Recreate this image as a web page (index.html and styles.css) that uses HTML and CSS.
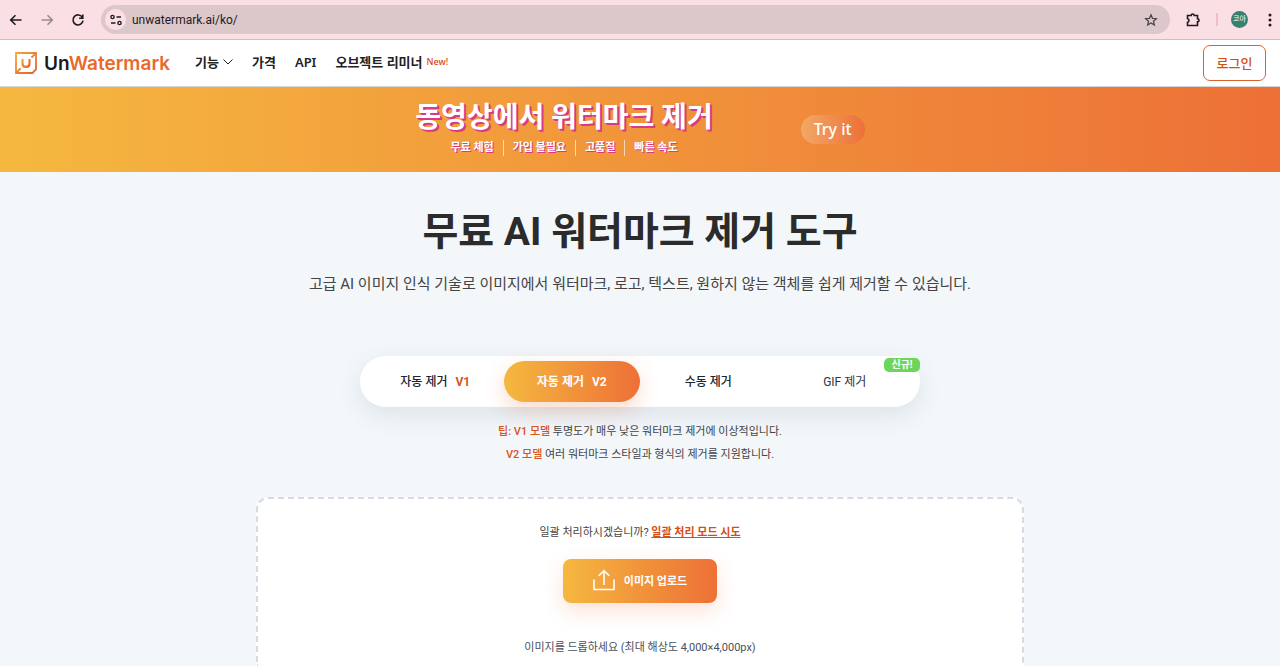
FILE: index.html
```html
<!DOCTYPE html>
<html lang="ko">
<head>
  <meta charset="UTF-8" />
  <title>UnWatermark</title>
  <meta name="viewport" content="width=device-width, initial-scale=1.0" />
  <link rel="stylesheet" href="styles.css">
</head>

<body>
  <div class="browser-bar">
    <button class="icon-btn" aria-label="뒤로">
      <svg width="16" height="16" viewBox="0 0 16 16"><path d="M13.5 8H3M7.500 3.200L2.700 8l4.800 4.800" /></svg>
    </button>
    <button class="icon-btn muted" aria-label="앞으로">
      <svg width="16" height="16" viewBox="0 0 16 16"><path d="M2.500 8H13M8.500 3.200L13.300 8l-4.800 4.800" /></svg>
    </button>
    <button class="icon-btn" aria-label="새로고침">
      <svg width="16" height="16" viewBox="0 0 16 16"><path d="M12.300 5.300A5 5 0 1 0 13 8.600M12.800 2.500v3.700H9.100" /></svg>
    </button>
    <div class="address">
      <button class="site-info" aria-label="사이트 정보">
        <svg width="14" height="14" viewBox="0 0 14 14"><circle cx="3.500" cy="4" r="1.600" /><path d="M7.500 4H12M2 10h4.500" /><circle cx="10.500" cy="10" r="1.600" /></svg>
      </button>
      <input type="text" class="url" aria-label="주소" value="unwatermark.ai/ko/" />
      <button class="icon-btn thin" aria-label="북마크">
        <svg width="14" height="14" viewBox="0 0 16 16"><path d="M8 2l1.700 4.100 4.500.4-3.400 2.900 1 4.400L8 11.500l-3.800 2.300 1-4.400L1.800 6.500l4.500-.4z" /></svg>
      </button>
    </div>
    <button class="icon-btn" aria-label="확장 프로그램">
      <svg width="16" height="16" viewBox="0 0 16 16"><path d="M2.500 3.500h3.700a1.500 1.500 0 0 1 3 0h3.300v3.300a1.500 1.500 0 0 1 0 3v3.700h-10v-3.200c2-.4 2-3.200 0-3.600z" /></svg>
    </button>
    <span class="bar-divider"></span>
    <span class="avatar">코아</span>
    <button class="icon-btn dots" aria-label="메뉴">
      <svg width="16" height="16" viewBox="0 0 16 16"><circle cx="8" cy="3" r="1.500" /><circle cx="8" cy="8" r="1.500" /><circle cx="8" cy="13" r="1.500" /></svg>
    </button>
  </div>

  <header class="header">
    <a href="#" class="logo">
      <svg width="22" height="22" viewBox="0 0 22 22">
        <defs>
          <linearGradient id="logoFill" x1="0" y1="0" x2="1" y2="1">
            <stop offset="0" stop-color="#f4a53c" />
            <stop offset="1" stop-color="#e4602c" />
          </linearGradient>
        </defs>
        <path d="M1 1H21V17.500L17.500 21H1zM18 4L21 1M1 21L4 18" fill="none" stroke="url(#logoFill)" stroke-width="1.800" />
        <path d="M7.500 7v4.500c0 4.600 7 4.600 7 0V7" fill="none" stroke="url(#logoFill)" stroke-width="2.200" />
        <path d="M16.500 5.500l1.500-1.500M4 18l1.500-1.500" fill="none" stroke="#ea7a32" stroke-width="2.200" />
      </svg>
      <span class="logo-text">Un<span>Watermark</span></span>
    </a>
    <nav class="nav">
      <a href="#">기능 <svg width="10" height="6" viewBox="0 0 10 6"><path d="M.5.5L5 5 9.500.5" /></svg></a>
      <a href="#">가격</a>
      <a href="#">API</a>
      <a href="#">오브젝트 리미너 <span class="new">New!</span></a>
    </nav>
    <button class="login">로그인</button>
  </header>

  <section class="banner">
    <div class="banner-text">
      <p class="banner-title">동영상에서 워터마크 제거</p>
      <ul class="banner-list">
        <li>무료 체험</li>
        <li>가입 불필요</li>
        <li>고품질</li>
        <li>빠른 속도</li>
      </ul>
    </div>
    <button class="try">Try it</button>
  </section>

  <main class="main">
    <h1>무료 AI 워터마크 제거 도구</h1>
    <p class="subtitle">고급 AI 이미지 인식 기술로 이미지에서 워터마크, 로고, 텍스트, 원하지 않는 객체를 쉽게 제거할 수 있습니다.</p>

    <div class="tabs">
      <button class="tab">자동 제거 <span>V1</span></button>
      <button class="tab active">자동 제거 <span>V2</span></button>
      <button class="tab">수동 제거</button>
      <button class="tab gif">GIF 제거</button>
      <span class="badge">신규!</span>
    </div>

    <div class="tips">
      <p><b>팁: V1 모델</b> 투명도가 매우 낮은 워터마크 제거에 이상적입니다.</p>
      <p><b>V2 모델</b> 여러 워터마크 스타일과 형식의 제거를 지원합니다.</p>
    </div>

    <div class="dropzone">
      <p class="batch">일괄 처리하시겠습니까? <a href="#">일괄 처리 모드 시도</a></p>
      <button class="upload">
        <svg width="22" height="22" viewBox="0 0 22 22"><path d="M1 10.500V20.500H21V10.500M11 16V2M5.800 6.800L11 1.600l5.200 5.200" /></svg>
        이미지 업로드
      </button>
      <p class="hint">이미지를 드롭하세요 (최대 해상도 4,000×4,000px)</p>
    </div>
  </main>
</body>
</html>
```

FILE: styles.css
```css
* {
  box-sizing: border-box;
}

body {
  display: flex;
  flex-direction: column;
  height: 100vh;
  margin: 0;
  overflow: hidden;
  font-family: Roboto, "Noto Sans CJK KR", sans-serif;
  background: #f3f7fa;
  color: #333;
}

h1,
p,
ul {
  margin: 0;
  padding: 0;
}

button,
input {
  font-family: inherit;
  border: none;
  background: none;
  padding: 0;
}

button {
  cursor: pointer;
}

a {
  color: inherit;
  text-decoration: none;
}

svg {
  display: block;
  fill: none;
  stroke: currentColor;
}

/* browser bar */
.browser-bar {
  display: flex;
  align-items: center;
  flex: none;
  gap: 15px;
  height: 40px;
  padding: 0 2px 0 8px;
  background: #fae0e4;
  border-bottom: 1px solid #cdbfc2;
}

.icon-btn {
  color: #1f1b1c;
  stroke-width: 1.6;
}

.icon-btn.muted {
  color: #9a8a8d;
}

.icon-btn.thin {
  color: #4a4345;
  stroke-width: 1.4;
}

.icon-btn.dots svg {
  fill: currentColor;
  stroke: none;
}

.address {
  display: flex;
  align-items: center;
  flex: 1;
  height: 29px;
  padding: 0 12px 0 4px;
  border-radius: 15px;
  background: #dcc8cb;
}

.site-info {
  display: flex;
  align-items: center;
  justify-content: center;
  width: 21px;
  height: 21px;
  border-radius: 50%;
  background: #fae0e4;
  color: #1f1b1c;
  stroke-width: 1.4;
}

.url {
  flex: 1;
  min-width: 0;
  margin-left: 6px;
  font-size: 12px;
  color: #1f1b1c;
}

.bar-divider {
  width: 2px;
  height: 13px;
  background: #f6bcc6;
}

.browser-bar .avatar {
  width: 17px;
  height: 17px;
  margin: 0 -1px 0 -2px;
  border-radius: 50%;
  background: #38816f;
  color: #fff;
  font-size: 7px;
  line-height: 17px;
  text-align: center;
}

/* header */
.header {
  display: flex;
  align-items: center;
  flex: none;
  height: 47px;
  padding: 0 14px 0 15px;
  background: #fff;
  border-bottom: 1px solid #d5d5d5;
}

.logo {
  display: flex;
  align-items: center;
  gap: 7px;
}

.logo-text {
  font-family: Inter, sans-serif;
  font-size: 19px;
  font-weight: 600;
  color: #1a1a1a;
}

.logo-text span {
  color: #e9692c;
}

.nav {
  display: flex;
  gap: 19px;
  margin-left: 25px;
  padding-bottom: 2px;
  font-family: "Noto Sans", "Noto Sans CJK KR", sans-serif;
  font-size: 13px;
  font-weight: 600;
  line-height: 20px;
  color: #222;
}

.nav a {
  display: flex;
  align-items: center;
  gap: 4px;
}

.nav .new {
  font-size: 9px;
  font-weight: 500;
  color: #d9480f;
}

.login {
  width: 63px;
  height: 36px;
  margin-left: auto;
  padding-bottom: 2px;
  border: 1px solid #d9622f;
  border-radius: 7px;
  font-size: 13px;
  font-weight: 500;
  color: #d4500f;
}

/* banner */
.banner {
  display: flex;
  align-items: center;
  justify-content: center;
  flex: none;
  gap: 88px;
  height: 85px;
  background: linear-gradient(to right, #f5b83f, #ed7037);
  color: #fff;
}

.banner-text {
  padding-bottom: 4px;
  text-align: center;
}

.banner-title {
  font-size: 28px;
  font-weight: 600;
  line-height: 36px;
  text-shadow: 1px 1px 0 #d53a8c, 2px 2px 0 #d53a8c;
}

.banner-list {
  display: flex;
  justify-content: center;
  margin-top: 4px;
  list-style: none;
  font-size: 11px;
  font-weight: 600;
  line-height: 16px;
  text-shadow: 1px 1px 0 #d53a8c;
}

.banner-list li {
  padding: 0 9px;
}

.banner-list li + li {
  border-left: 1px solid #fbd9b4;
}

.try {
  width: 64px;
  height: 29px;
  padding-bottom: 2px;
  border-radius: 15px;
  background: linear-gradient(to right, #f2a866, #ed7037);
  color: #fff;
  font-family: "Noto Sans", sans-serif;
  font-size: 16px;
  font-weight: 500;
}

/* main */
.main {
  display: flex;
  flex-direction: column;
  align-items: center;
  flex: 1;
  padding-top: 30px;
}

h1 {
  font-size: 39px;
  font-weight: 700;
  line-height: 60px;
  color: #2b2b2b;
}

.subtitle {
  margin-top: 10px;
  font-size: 15px;
  line-height: 24px;
  color: #444;
}

.tabs {
  position: relative;
  display: grid;
  grid-template-columns: repeat(4, 1fr);
  width: 560px;
  max-width: 100%;
  margin-top: 60px;
  padding: 5px 7px;
  border-radius: 26px;
  background: #fff;
  box-shadow: 0 8px 24px rgba(60, 80, 110, 0.12);
}

.tab {
  height: 41px;
  padding-bottom: 2px;
  border-radius: 21px;
  font-size: 12px;
  font-weight: 500;
  color: #1c2333;
}

.tab span {
  margin-left: 5px;
  font-weight: 700;
  color: #d9541e;
}

.tab.active {
  background: linear-gradient(to right, #f5b83f, #ed7037);
  box-shadow: 0 8px 20px rgba(237, 112, 55, 0.25);
  font-weight: 700;
  color: #fff;
}

.tab.active span {
  color: #fff;
}

.tab.gif {
  font-weight: 400;
  color: #333;
}

.badge {
  position: absolute;
  top: 2px;
  right: 0;
  width: 36px;
  border-radius: 5px;
  background: #6bd65a;
  color: #fff;
  font-size: 10px;
  font-weight: 700;
  line-height: 14px;
  text-align: center;
}

.tips {
  margin-top: 13px;
  font-size: 11px;
  line-height: 23px;
  text-align: center;
  color: #444;
}

.tips b {
  font-weight: 500;
  color: #d9541e;
}

.dropzone {
  display: flex;
  flex-direction: column;
  align-items: center;
  flex: 1;
  width: 60%;
  margin-top: 31px;
  padding-top: 24px;
  border: 2px dashed #d8dae3;
  border-bottom: none;
  border-radius: 12px 12px 0 0;
  background: #fff;
}

.batch {
  font-size: 11px;
  line-height: 20px;
  color: #444;
}

.batch a {
  font-weight: 600;
  color: #d4500f;
  text-decoration: underline;
}

.upload {
  display: flex;
  align-items: center;
  justify-content: center;
  gap: 9px;
  width: 154px;
  height: 44px;
  margin-top: 16px;
  padding-bottom: 2px;
  border-radius: 8px;
  background: linear-gradient(to right, #f5b83f, #ed7037);
  box-shadow: 0 8px 20px rgba(237, 112, 55, 0.2);
  color: #fff;
  font-size: 11px;
  font-weight: 700;
}

.upload svg {
  stroke-width: 1.6;
}

.hint {
  margin-top: 36px;
  font-size: 11px;
  line-height: 18px;
  color: #4a4f60;
}
```
